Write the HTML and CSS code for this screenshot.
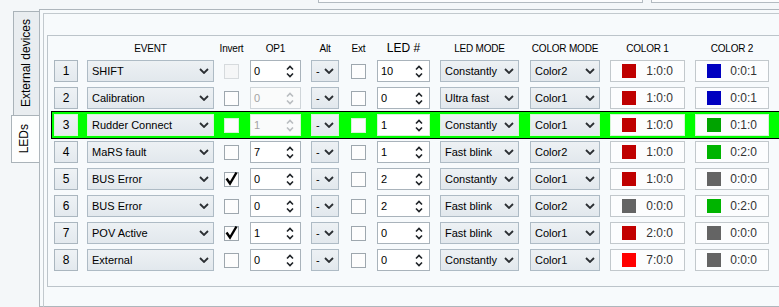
FILE: index.html
```html
<!DOCTYPE html>
<html lang="en">
<head>
    <meta charset="UTF-8">
    <title>LEDs</title>
    <link rel="stylesheet" href="styles.css">
</head>
<body>
    <!-- bottom edges of the widgets above -->
    <div class="top">
        <div class="top-box box-a"></div>
        <div class="top-box box-b"></div>
    </div>

    <div class="tabs">
        <div class="tabbar">
            <div class="tab ext-tab"><span>External devices</span></div>
            <div class="tab led-tab"><span>LEDs</span></div>
        </div>

        <div class="panel">
            <div class="group">
                <div class="frame">
                    <div class="grid head">
                        <div class="hd c-idx"></div>
                        <div class="hd c-ev">EVENT</div>
                        <div class="hd c-chk">Invert</div>
                        <div class="hd c-op">OP1</div>
                        <div class="hd c-alt">Alt</div>
                        <div class="hd c-chk">Ext</div>
                        <div class="hd c-led big">LED #</div>
                        <div class="hd c-mode">LED MODE</div>
                        <div class="hd c-cm">COLOR MODE</div>
                        <div class="hd c-col">COLOR 1</div>
                        <div class="hd c-col2">COLOR 2</div>
                    </div>

                    <div id="rows" class="rows"></div>
                </div>
            </div>
        </div>
    </div>

    <script>
        // table data: idx, event, invert, op1, op1 enabled, led, mode, color mode, color1, color2
        const rows = [
            [1, 'SHIFT', 'off', '0', true, '10', 'Constantly', 'Color2', ['#bf0000', '1:0:0'], ['#0000c0', '0:0:1']],
            [2, 'Calibration', false, '0', false, '0', 'Ultra fast', 'Color1', ['#bf0000', '1:0:0'], ['#0000c0', '0:0:1']],
            [3, 'Rudder Connect', false, '1', false, '1', 'Constantly', 'Color1', ['#bf0000', '1:0:0'], ['#00a300', '0:1:0']],
            [4, 'MaRS fault', false, '7', true, '1', 'Fast blink', 'Color2', ['#bf0000', '1:0:0'], ['#00b400', '0:2:0']],
            [5, 'BUS Error', true, '0', true, '2', 'Constantly', 'Color1', ['#bf0000', '1:0:0'], ['#646464', '0:0:0']],
            [6, 'BUS Error', false, '0', true, '2', 'Fast blink', 'Color2', ['#646464', '0:0:0'], ['#00b400', '0:2:0']],
            [7, 'POV Active', true, '1', true, '0', 'Fast blink', 'Color1', ['#c20000', '2:0:0'], ['#646464', '0:0:0']],
            [8, 'External', false, '0', true, '0', 'Constantly', 'Color1', ['#ff0000', '7:0:0'], ['#646464', '0:0:0']]
        ];

        const chevron = '<svg class="chev" width="10" height="6" viewBox="0 0 10 6"><path d="M1 1 L5 5 L9 1" fill="none" stroke="currentColor" stroke-width="1.8"/></svg>';
        const arrows = '<svg class="arr" width="8" height="13" viewBox="0 0 8 13"><path d="M1 4.5 L4 1.5 L7 4.5 M1 8.5 L4 11.5 L7 8.5" fill="none" stroke="currentColor" stroke-width="1.6"/></svg>';
        const tick = '<svg width="15" height="15" viewBox="0 0 15 15"><path d="M2.5 7.5 L6 12.5 L12.5 1.5" fill="none" stroke="#000" stroke-width="2.4"/></svg>';

        const sel = (cls, text) => `<div class="sel ${cls}"><span>${text}</span>${chevron}</div>`;
        const spin = (cls, text, on) => `<div class="spin ${cls}${on ? '' : ' off'}"><span>${text}</span>${arrows}</div>`;
        const check = (state) => `<div class="chk${state === 'off' ? ' dis' : ''}">${state === true ? tick : ''}</div>`;
        const color = (cls, c) => `<div class="cbox ${cls}"><i style="background:${c[0]}"></i><span>${c[1]}</span></div>`;

        document.getElementById('rows').innerHTML = rows.map(r => `
            <div class="grid row${r[0] === 3 ? ' picked' : ''}">
                <div class="idx c-idx">${r[0]}</div>
                ${sel('c-ev', r[1])}
                ${check(r[2])}
                ${spin('c-op', r[3], r[4])}
                ${sel('c-alt', '-')}
                ${check(false)}
                ${spin('c-led', r[5], true)}
                ${sel('c-mode', r[6])}
                ${sel('c-cm', r[7])}
                ${color('c-col', r[8])}
                ${color('c-col2', r[9])}
            </div>`).join('');
    </script>
</body>
</html>
```

FILE: styles.css
```css
/* General */
body {
    margin: 0;
    width: 779px;
    height: 307px;
    overflow: hidden;
    font-family: "Liberation Sans", Arial, sans-serif;
    font-size: 11px;
    color: #000;
    background: #f4f7f9;
}

/* Strip of the widgets above */
.top {
    display: flex;
    gap: 8px;
    height: 3px;
    padding-left: 318px;
}

.top-box {
    height: 2px;
    border: 1px solid #b3bbc1;
    border-top: none;
    background: #fbfcfd;
}

.box-a {
    width: 323px;
}

.box-b {
    flex: 1;
    margin-right: -4px;
}

/* Tabs */
.tabs {
    display: flex;
    margin-top: 6px;
}

.tabbar {
    width: 39px;
    padding-top: 2px;
    display: flex;
    flex-direction: column;
    align-items: flex-end;
}

.tab {
    display: flex;
    align-items: center;
    justify-content: center;
    border: 1px solid #aab3b9;
    border-right: none;
    font-size: 12px;
    box-sizing: border-box;
}

.tab span {
    writing-mode: vertical-rl;
    transform: rotate(180deg);
}

.ext-tab {
    width: 26px;
    height: 105px;
    background: #e9edf0;
    padding-right: 1px;
}

.led-tab {
    width: 28px;
    height: 48px;
    margin-top: -1px;
    background: #fdfefe;
    padding-right: 4px;
}

.panel {
    flex: 1;
    height: 293px;
    margin-right: -6px;
    padding: 3px 0 0 3px;
    border: 1px solid #aeb6bc;
    border-right: none;
    background: #f7fafc;
}

.group {
    height: 262px;
    padding: 21px 0 12px 3px;
    border: 1px solid #c2c9ce;
    border-right: none;
}

.frame {
    height: 247px;
    padding: 3px 0 0 6px;
    border: 1px solid #bcc4ca;
    border-right: none;
}

/* Grid */
.grid {
    display: grid;
    grid-template-columns: 33px 137px 26px 61px 40px 26px 63px 90px 80px 85px 74px;
    align-items: center;
}

.head {
    height: 18px;
    margin-bottom: 3px;
}

.hd {
    display: flex;
    justify-content: center;
    white-space: nowrap;
    font-size: 10px;
    letter-spacing: -0.2px;
}

.hd.big {
    font-size: 12px;
    letter-spacing: 0;
}

.rows {
    display: flex;
    flex-direction: column;
    gap: 5px;
}

.row {
    height: 22px;
}

.row.picked {
    margin: -3px -7px -3px -3px;
    padding: 2px 6px 2px 2px;
    border: 1px solid #000;
    background: #00ff00;
}

/* Column widths */
.c-idx { width: 24px; }
.c-ev { width: 127px; }
.c-chk { width: 15px; }
.c-op { width: 51px; }
.c-alt { width: 28px; }
.c-led { width: 53px; }
.c-mode { width: 79px; }
.c-cm { width: 70px; }
.c-col { width: 75px; }
.c-col2 { width: 74px; }

/* Widgets */
.idx,
.sel,
.spin,
.cbox {
    height: 22px;
    box-sizing: border-box;
}

.idx {
    display: flex;
    align-items: center;
    justify-content: center;
    font-size: 12px;
    border: 1px solid #aab6bf;
    background: linear-gradient(#eef2f5, #e3e9ee);
}

.sel {
    display: flex;
    align-items: center;
    justify-content: space-between;
    padding: 0 4px 0 4px;
    border: 1px solid #aebbc5;
    background: linear-gradient(#edf1f4, #e2e8ed);
    white-space: nowrap;
}

.chev {
    color: #2b2f33;
    flex: none;
}

.chk {
    width: 15px;
    height: 15px;
    box-sizing: border-box;
    border: 1px solid #9ea7ae;
    background: #fdfdfd;
    position: relative;
}

.chk svg {
    position: absolute;
    left: -1px;
    top: -2px;
}

.chk.dis {
    border-color: #d6dadd;
    background: #f5f6f7;
}

.spin {
    display: flex;
    align-items: center;
    justify-content: space-between;
    padding: 0 6px 0 3px;
    border: 1px solid #a9b3bb;
    background: #fff;
}

.arr {
    color: #1e2226;
}

.spin.off {
    color: #a3a3a3;
    border-color: #cfd5d9;
    background: #fafbfb;
}

.spin.off .arr {
    color: #b9bdc0;
}

.cbox {
    display: flex;
    align-items: center;
    justify-content: space-between;
    padding: 0 11px 0 11px;
    font-size: 12px;
    color: #333;
    border: 1px solid #c2c8cc;
    background: #fcfdfe;
}

.cbox i {
    width: 14px;
    height: 14px;
}

/* Selected row widgets */
.picked .idx,
.picked .sel,
.picked .spin,
.picked .chk,
.picked .cbox {
    border-color: #d4f6d4;
}
```
